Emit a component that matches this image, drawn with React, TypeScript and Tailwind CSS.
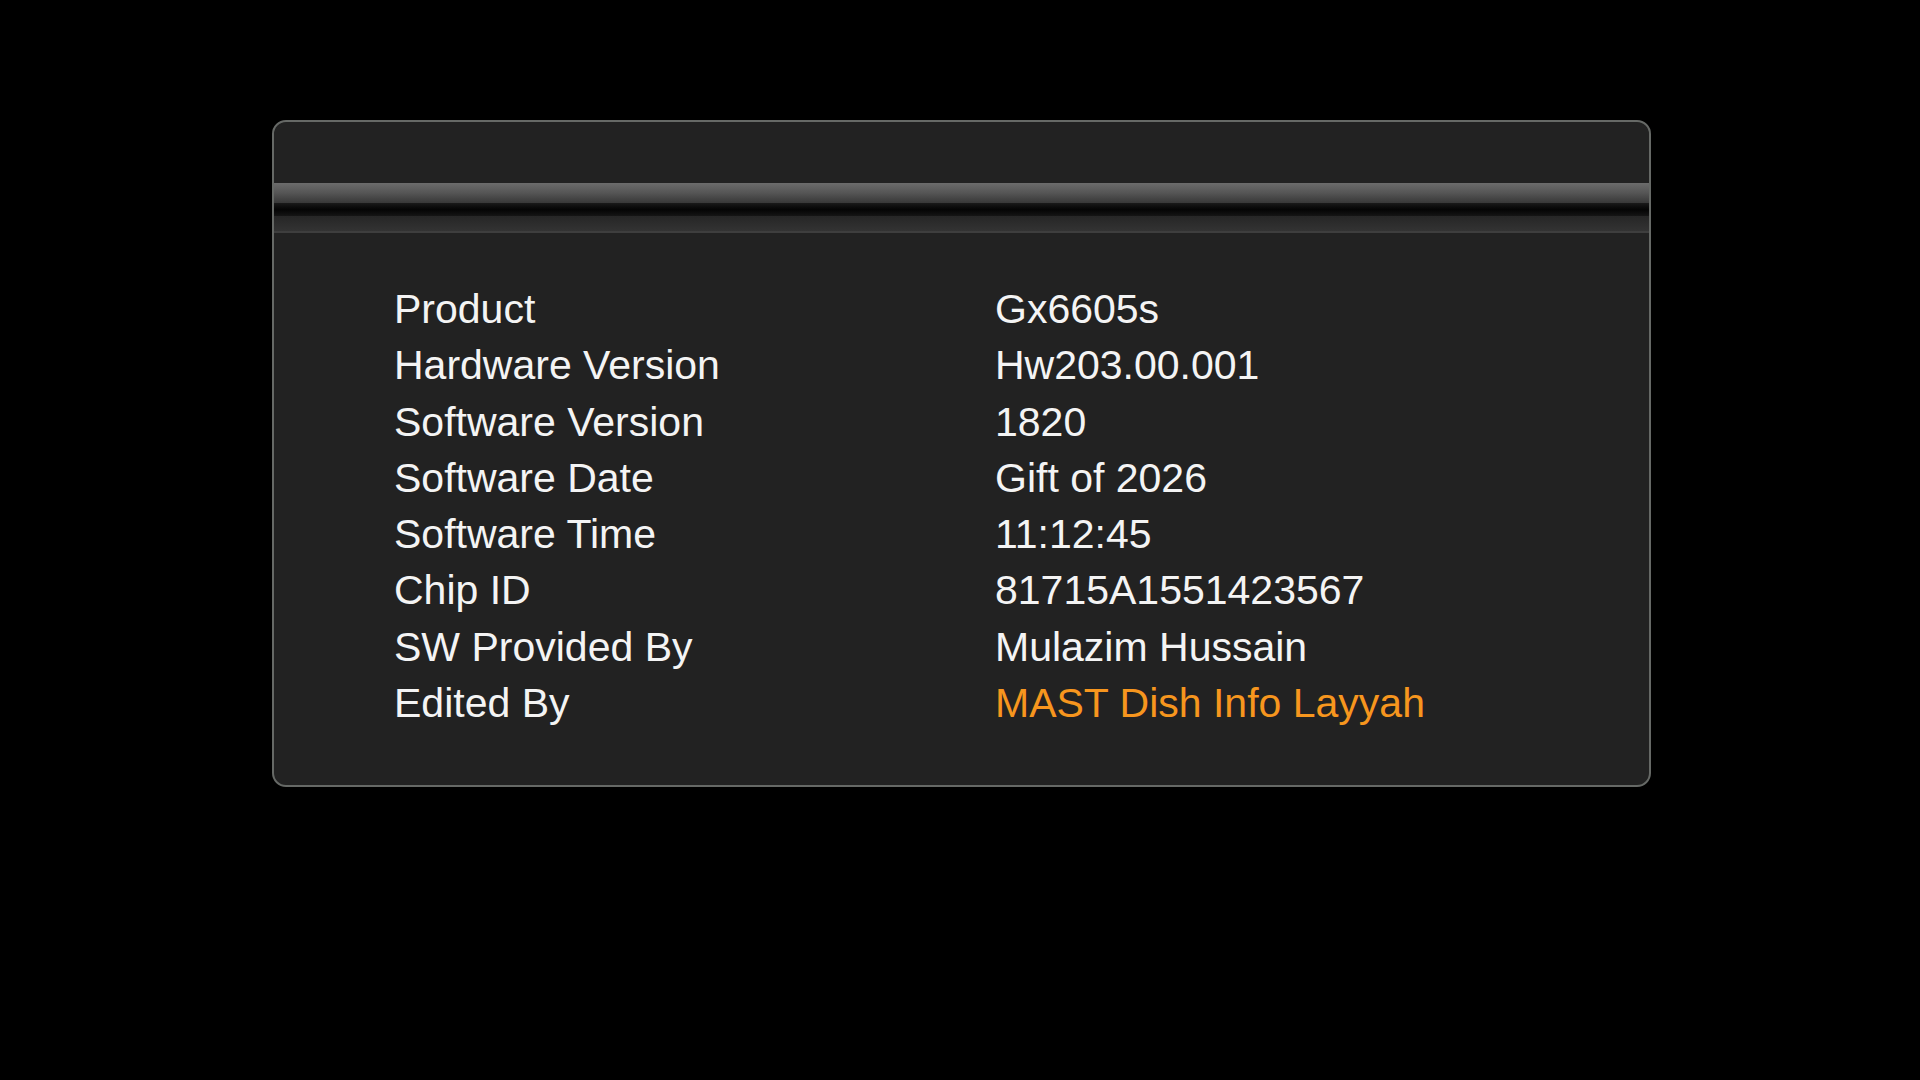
import React from 'react'

const rows: { label: string, value: string, accent?: boolean }[] = [
  { label: 'Product', value: 'Gx6605s' },
  { label: 'Hardware Version', value: 'Hw203.00.001' },
  { label: 'Software Version', value: '1820' },
  { label: 'Software Date', value: 'Gift of 2026' },
  { label: 'Software Time', value: '11:12:45' },
  { label: 'Chip ID', value: '81715A1551423567' },
  { label: 'SW Provided By', value: 'Mulazim Hussain' },
  { label: 'Edited By', value: 'MAST Dish Info Layyah', accent: true },
]

export default function App() {
  return (
    <div className="h-[1080px] w-[1920px] bg-black pl-[272px] pt-[120px]" style={ { fontFamily: '"Liberation Sans", Arial, sans-serif' } }>
      <div className="flex h-[667px] w-[1379px] flex-col rounded-[14px] border-2 border-[#666966] bg-[#222222]">
        {/* header bar */}
        <div className="mt-[61px] flex flex-col">
          <div className="h-[20px] bg-linear-to-b from-[#6c6c6c] via-[#555555] to-[#383838]" />
          <div className="h-[13px] bg-linear-to-b from-[#1a1a1a] via-[#050505] to-[#151515]" />
          <div className="h-[15px] bg-linear-to-b from-[#262626] to-[#333333]" />
          <div className="h-[2px] bg-[#3e3e3e]" />
        </div>

        {/* info rows */}
        <div className="mt-[48px] flex flex-col pl-[120px]">
          { rows.map(row => (
            <div key={ row.label } className="flex h-[56.3px] items-center text-[41px] leading-[56.3px]">
              <span className="w-[601px] text-[#f4f4f4]">{ row.label }</span>
              <span className={ row.accent ? 'text-[#f7961e]' : 'text-[#f4f4f4]' }>{ row.value }</span>
            </div>
          )) }
        </div>
      </div>
    </div>
  )
}
